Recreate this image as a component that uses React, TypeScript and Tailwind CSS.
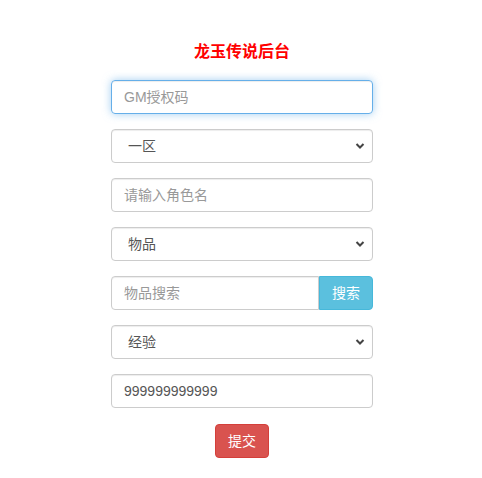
import { useState } from "react";

function Chevron() {
  return (
    <svg
      className="pointer-events-none absolute right-[8px] top-1/2 -translate-y-1/2"
      width="10"
      height="7"
      viewBox="0 0 10 7"
    >
      <path d="M1.5 1.5 L5 5 L8.5 1.5" fill="none" stroke="#444" strokeWidth="2" />
    </svg>
  );
}

function Select({ value, options }: { value: string; options: string[] }) {
  const [v, setV] = useState(value);
  return (
    <div className="relative">
      <select
        value={v}
        onChange={(e) => setV(e.target.value)}
        className="h-[34px] w-full appearance-none rounded-[4px] border border-[#ccc] bg-white pl-[16px] pr-8 text-[14px] text-[#555] shadow-[inset_0_1px_1px_rgba(0,0,0,0.075)] outline-none"
      >
        {options.map((o) => (
          <option key={o}>{o}</option>
        ))}
      </select>
      <Chevron />
    </div>
  );
}

export default function App() {
  return (
    <div className="min-h-screen bg-white font-['Liberation_Sans','Noto_Sans_CJK_SC',sans-serif]">
      <div className="flex justify-center pl-[2px]">
        <div className="w-[262px] pt-[41px]">
          <h1 className="mb-[17px] text-center text-[16px] font-bold leading-[22px] text-[#f00]">
            龙玉传说后台
          </h1>
          <div className="flex flex-col gap-[15px]">
            <input
              placeholder="GM授权码"
              className="h-[34px] w-full rounded-[4px] border border-[#66afe9] px-[12px] text-[14px] text-[#555] placeholder-[#999] shadow-[inset_0_1px_1px_rgba(0,0,0,0.075),0_0_8px_rgba(102,175,233,0.6)] outline-none"
            />
            <Select value="一区" options={["一区", "二区", "三区"]} />
            <input
              placeholder="请输入角色名"
              className="h-[34px] w-full rounded-[4px] border border-[#ccc] px-[12px] text-[14px] text-[#555] placeholder-[#999] shadow-[inset_0_1px_1px_rgba(0,0,0,0.075)] outline-none"
            />
            <Select value="物品" options={["物品", "元宝", "金币"]} />
            <div className="flex">
              <input
                placeholder="物品搜索"
                className="h-[34px] min-w-0 flex-1 rounded-l-[4px] border border-[#ccc] px-[12px] text-[14px] text-[#555] placeholder-[#999] shadow-[inset_0_1px_1px_rgba(0,0,0,0.075)] outline-none"
              />
              <button className="h-[34px] w-[54px] rounded-r-[4px] border border-[#46b8da] bg-[#5bc0de] text-[14px] text-white">
                搜索
              </button>
            </div>
            <Select value="经验" options={["经验", "等级"]} />
            <input
              defaultValue="999999999999"
              className="h-[34px] w-full rounded-[4px] border border-[#ccc] px-[12px] text-[14px] text-[#555] shadow-[inset_0_1px_1px_rgba(0,0,0,0.075)] outline-none"
            />
          </div>
          <div className="mt-[16px] flex justify-center">
            <button className="h-[34px] w-[54px] rounded-[4px] border border-[#d43f3a] bg-[#d9534f] text-[14px] text-white">
              提交
            </button>
          </div>
        </div>
      </div>
    </div>
  );
}
